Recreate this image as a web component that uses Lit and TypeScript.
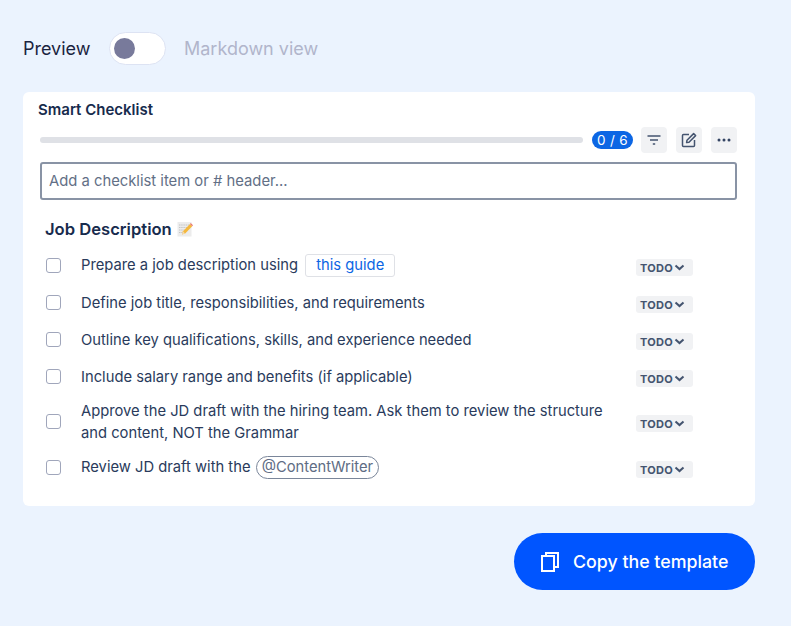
import { LitElement, html, css } from "lit";
import { customElement } from "lit/decorators.js";

const rows: any[] = [
  { t: html`Prepare a job description using <a class="link">this guide</a>` },
  { t: html`Define job title, responsibilities, and requirements` },
  { t: html`Outline key qualifications, skills, and experience needed` },
  { t: html`Include salary range and benefits (if applicable)` },
  { t: html`Approve the JD draft with the hiring team. Ask them to review the structure and content, NOT the Grammar`, two: true },
  { t: html`Review JD draft with the <span class="mention">@ContentWriter</span>` },
];

@customElement("app-root")
export class AppRoot extends LitElement {
  static styles = css`
    :host { display: block; width: 791px; height: 626px; background: #ebf3fe; font-family: Inter, "Liberation Sans", sans-serif; color: #172b4d; overflow: hidden; }
    .page { padding: 32px 36px 0 23px; display: flex; flex-direction: column; }
    .switch { display: flex; align-items: center; height: 33px; }
    .pv { font-size: 18px; color: #1a2340; width: 86px; }
    .toggle { box-sizing: border-box; width: 57px; height: 33px; border-radius: 17px; background: #fff; border: 1px solid #dde3f3; padding: 4px; margin-right: 18px; display: flex; align-items: center; }
    .knob { width: 21px; height: 21px; border-radius: 50%; background: #787a9b; }
    .md { font-size: 18px; color: #b1b5cb; }
    .card { margin-top: 27px; height: 414px; box-sizing: border-box; background: #fff; border-radius: 6px; padding: 9px 18px 0 15px; }
    .title { font-size: 15px; font-weight: 600; line-height: 18px; color: #172b4d; }
    .bar { display: flex; align-items: center; margin: 8px 0 0 2px; height: 26px; }
    .track { flex: 1; height: 6px; border-radius: 3px; background: #dfe1e6; }
    .count { margin-left: 9px; width: 41px; height: 18px; border-radius: 9px; background: #0c66e4; color: #fff; font-size: 13.5px; letter-spacing: 0.3px; line-height: 18px; text-align: center; }
    .ib { width: 26px; height: 26px; border-radius: 4px; background: #f1f2f4; display: flex; align-items: center; justify-content: center; }
    .ib.first { margin-left: 8px; }
    .ib + .ib { margin-left: 9px; }
    .input { box-sizing: border-box; margin: 9px 0 0 2px; height: 38px; border: 2px solid #8993a5; border-radius: 3px; font-size: 14.8px; line-height: 35px; padding-left: 7px; color: #626f86; }
    h3 { margin: 17px 0 0 7px; font-size: 16.6px; font-weight: 600; line-height: 24px; color: #172b4d; display: flex; align-items: center; gap: 5px; }
    .list { margin-top: 6px; margin-left: 2px; }
    .row { display: flex; align-items: center; min-height: 37px; }
    .row.two { min-height: 53px; }
    .row.last { min-height: 39px; }
    .cb { box-sizing: border-box; width: 15px; height: 15px; margin-left: 6px; border: 1.5px solid #a0a6bb; border-radius: 3px; flex: none; }
    .text { width: 530px; margin-left: 20px; font-size: 14.75px; line-height: 22px; color: #2a3b5c; flex: none; }
    .link { display: inline-block; box-sizing: border-box; height: 23px; line-height: 21px; padding: 0 10px; margin-left: 3px; border: 1px solid #dfe1e6; border-radius: 3px; color: #0c66e4; }
    .mention { display: inline-block; box-sizing: border-box; height: 23px; line-height: 21px; padding: 0 5px; margin-left: 1px; border: 1px solid #7a869a; border-radius: 12px; color: #5e6c84; }
    .todo { margin-left: 25px; display: flex; align-items: center; box-sizing: border-box; padding-left: 4px; width: 57px; height: 17px; border-radius: 3px; background: #f1f2f4; color: #44546f; font-size: 11px; font-weight: 700; letter-spacing: 0.3px; position: relative; top: 2px; }
    .foot { display: flex; justify-content: flex-end; margin-top: 27px; }
    .copy { width: 241px; height: 57px; border-radius: 29px; background: #0055ff; color: #fff; font-size: 17.8px; font-weight: 500; display: flex; align-items: center; gap: 14px; padding-left: 27px; box-sizing: border-box; }
  `;

  render() {
    return html`<div class="page">
      <div class="switch">
        <span class="pv">Preview</span>
        <div class="toggle"><div class="knob"></div></div>
        <span class="md">Markdown view</span>
      </div>
      <div class="card">
        <div class="title">Smart Checklist</div>
        <div class="bar">
          <div class="track"></div>
          <div class="count">0 / 6</div>
          <div class="ib first"><svg width="16" height="16" viewBox="0 0 16 16" fill="none" stroke="#44546f" stroke-width="1.3"><path d="M1.5 4h13M4 8h8M6.8 12h2.4"/></svg></div>
          <div class="ib"><svg width="16" height="16" viewBox="0 0 16 16" fill="none" stroke="#44546f" stroke-width="1.5" stroke-linejoin="round"><path d="M8 2.5H2.5a1 1 0 0 0-1 1v10a1 1 0 0 0 1 1h10a1 1 0 0 0 1-1V8"/><path d="M6 8.2 12.6 1.6l2 2L8 10.2l-2.4.4z"/></svg></div>
          <div class="ib"><svg width="16" height="16" viewBox="0 0 16 16" fill="#344563"><circle cx="3" cy="8" r="1.5"/><circle cx="8" cy="8" r="1.5"/><circle cx="13" cy="8" r="1.5"/></svg></div>
        </div>
        <div class="input">Add a checklist item or # header...</div>
        <h3>Job Description
          <svg width="16" height="16" viewBox="0 0 16 16">
            <rect x="0.5" y="1" width="14" height="14.5" fill="#ececec"/>
            <path d="M2 4h11M2 6.5h11M2 9h7M2 11.5h5" stroke="#bdbdbd" stroke-width="0.8" stroke-dasharray="1.5 .7"/>
            <path d="M5 13.5l1-3.2 7-7.3 2.2 2.2-7 7.2z" fill="#f5b83c"/>
            <path d="M13 3l2.2 2.2 .8-.9-2.2-2.2z" fill="#e9776f"/>
            <path d="M5 13.5l1-3.2 2.2 2.1z" fill="#f3d9ae"/>
          </svg>
        </h3>
        <div class="list">
          ${rows.map((r, i) => html`<div class="row ${r.two ? "two" : ""} ${i === 5 ? "last" : ""}">
            <div class="cb"></div>
            <div class="text">${r.t}</div>
            <div class="todo">TODO<svg width="13" height="8" viewBox="0 0 13 8" fill="none" stroke="#44546f" stroke-width="2"><path d="M2.5 1.5l4 3.6 4-3.6"/></svg></div>
          </div>`)}
        </div>
      </div>
      <div class="foot">
        <div class="copy">
          <svg width="18" height="20" viewBox="0 0 18 20" fill="none" stroke="#fff" stroke-width="2"><rect x="1" y="4" width="12" height="15"/><path d="M5 4V1h12v14h-4"/></svg>
          <span>Copy the template</span>
        </div>
      </div>
    </div>`;
  }
}
